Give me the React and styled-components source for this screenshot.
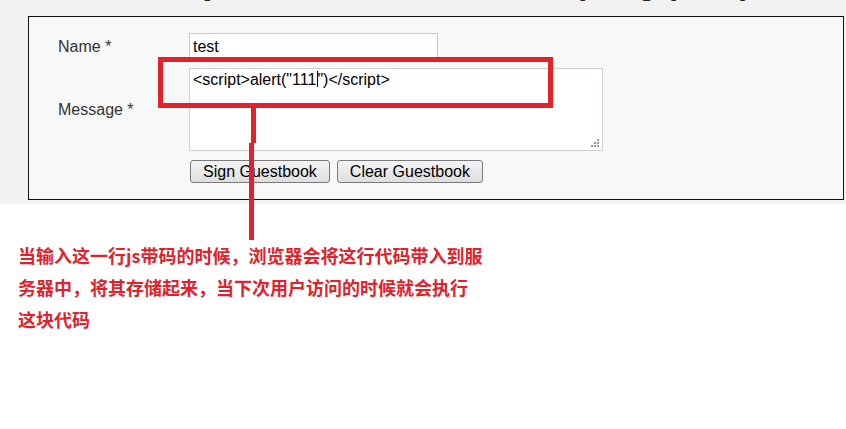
import React from 'react';
import styled, { createGlobalStyle } from 'styled-components';

const GlobalStyle = createGlobalStyle`
    html, body {
        margin: 0;
        padding: 0;
        background: #ffffff;
        font-family: "Liberation Sans", Arial, sans-serif;
    }
`;

const RED = '#e2212b';

const Page = styled.div`
    position: relative;
    width: 846px;
    height: 429px;
    overflow: hidden;
`;

const GrayArea = styled.div`
    background: #f2f2f2;
    padding: 0 2px 4px 28px;
`;

const Title = styled.h1`
    margin: -33px 0 0 2px;
    height: 32px;
    font-size: 32px;
    line-height: 32px;
    font-weight: bold;
    color: #222;
    white-space: nowrap;
`;

const FormBox = styled.div`
    margin-top: 17px;
    border: 1px solid #111;
    background: #f7f8f8;
    padding: 16px 0 16px 29px;
`;

const FormGrid = styled.div`
    display: grid;
    grid-template-columns: 131px auto;
    row-gap: 10px;
    align-items: center;
`;

const Label = styled.label`
    font-size: 16px;
    color: #333;
    padding-top: ${p => (p.$top ? 2 : 0)}px;
`;

const TextInput = styled.div`
    box-sizing: border-box;
    width: 249px;
    height: 25px;
    border: 1px solid #c9c9c9;
    background: #fff;
    padding: 3px 3px 0;
    font-size: 16px;
    line-height: 19px;
    color: #000;
`;

const TextBox = styled.div`
    position: relative;
    box-sizing: border-box;
    width: 414px;
    height: 83px;
    border: 1px solid #cfcfcf;
    background: #fff;
    padding: 1px 3px;
    font-size: 16px;
    line-height: 19px;
    color: #000;
`;

const Caret = styled.span`
    display: inline-block;
    width: 1px;
    height: 16px;
    margin: 0 -1px 0 1px;
    background: #000;
    vertical-align: -2px;
`;

const Grip = styled.svg`
    position: absolute;
    right: 2px;
    bottom: 2px;
`;

const Buttons = styled.div`
    grid-column: 2;
    display: flex;
    gap: 7px;
    margin: -1px 0 0 1px;
`;

const Button = styled.button`
    box-sizing: border-box;
    height: 23px;
    padding: 0 12px;
    border: 1px solid #7a7a7a;
    border-radius: 3px;
    background: linear-gradient(#f4f4f4, #dedede);
    font-family: "Liberation Sans", Arial, sans-serif;
    font-size: 16px;
    line-height: 20px;
    color: #000;
`;

const Note = styled.p`
    margin: 35px 0 0 18px;
    font-family: "Noto Sans CJK SC", sans-serif;
    font-weight: 700;
    font-size: 18px;
    line-height: 32px;
    color: ${RED};
`;

const MarkBox = styled.div`
    position: absolute;
    left: 158px;
    top: 57px;
    width: 395px;
    height: 51px;
    box-sizing: border-box;
    border: 5px solid ${RED};
`;

const MarkLine = styled.div`
    position: absolute;
    width: 5px;
    background: ${RED};
    left: ${p => p.$x}px;
    top: ${p => p.$y}px;
    height: ${p => p.$h}px;
`;

function ResizeGrip() {
    const dots = [[8, 0], [5, 3], [8, 3], [2, 6], [5, 6], [8, 6]];
    return (
        <Grip width="11" height="9" viewBox="0 0 11 9">
            {dots.map(([x, y]) => (
                <rect key={x + '-' + y} x={x} y={y} width="2" height="2" fill="#9a9a9a" />
            ))}
        </Grip>
    );
}

export default function App() {
    return (
        <Page>
            <GlobalStyle />
            <GrayArea>
                <Title>Vulnerability: Stored Cross Site Scripting (XSS)</Title>
                <FormBox>
                    <FormGrid>
                        <Label $top>Name *</Label>
                        <TextInput>test</TextInput>
                        <Label>Message *</Label>
                        <TextBox>
                            &lt;script&gt;alert("111<Caret />")&lt;/script&gt;
                            <ResizeGrip />
                        </TextBox>
                        <Buttons>
                            <Button>Sign Guestbook</Button>
                            <Button>Clear Guestbook</Button>
                        </Buttons>
                    </FormGrid>
                </FormBox>
            </GrayArea>
            <Note>
                当输入这一行js带码的时候，浏览器会将这行代码带入到服<br />
                务器中，将其存储起来，当下次用户访问的时候就会执行<br />
                这块代码
            </Note>
            <MarkBox />
            <MarkLine $x={251} $y={108} $h={35} />
            <MarkLine $x={249} $y={143} $h={97} />
        </Page>
    );
}
